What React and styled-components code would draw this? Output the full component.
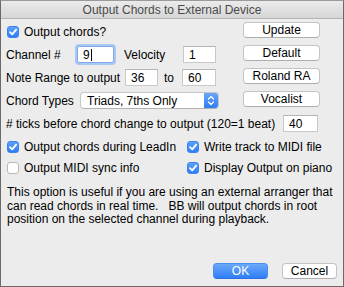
import React from "react";
import styled, { createGlobalStyle } from "styled-components";

const GlobalStyle = createGlobalStyle`
  html, body {
    margin: 0;
    padding: 0;
    background: #ececec;
  }
  body {
    font-family: "Liberation Sans", Arial, sans-serif;
    -webkit-font-smoothing: antialiased;
  }
`;

function Check({ on }) {
  return (
    <Box on={on ? 1 : 0}>
      {on && (
        <svg width="10" height="10" viewBox="0 0 10 10">
          <path d="M2 5.2 L4.2 7.4 L8.2 2.6" fill="none" stroke="#fff" strokeWidth="1.8" strokeLinecap="round" strokeLinejoin="round" />
        </svg>
      )}
    </Box>
  );
}

function CheckItem({ on, children }) {
  return (
    <CheckLabel>
      <Check on={on} />
      <span>{children}</span>
    </CheckLabel>
  );
}

export default function App() {
  return (
    <Window>
      <GlobalStyle />
      <TitleBar>Output Chords to External Device</TitleBar>
      <Body>
        <Top>
          <LeftCol>
            <Row>
              <CheckItem on>Output chords?</CheckItem>
            </Row>
            <Row>
              <Label w={71}>Channel #</Label>
              <Field w={37} focused>9<Caret /></Field>
              <Label w={59} style={{ marginLeft: 10 }}>Velocity</Label>
              <Field w={33}>1</Field>
            </Row>
            <Row>
              <Label w={119}>Note Range to output</Label>
              <Field w={33}>36</Field>
              <To>to</To>
              <Field w={34}>60</Field>
            </Row>
            <Row>
              <Label w={74}>Chord Types</Label>
              <Select>
                <span>Triads, 7ths Only</span>
                <Stepper>
                  <svg width="8" height="11" viewBox="0 0 8 11">
                    <path d="M1.5 4 L4 1.5 L6.5 4 M1.5 7 L4 9.5 L6.5 7" fill="none" stroke="#fff" strokeWidth="1.3" strokeLinecap="round" strokeLinejoin="round" />
                  </svg>
                </Stepper>
              </Select>
            </Row>
          </LeftCol>
          <RightCol>
            <Button>Update</Button>
            <Button>Default</Button>
            <Button>Roland RA</Button>
            <Button>Vocalist</Button>
          </RightCol>
        </Top>
        <TicksRow>
          <span># ticks before chord change to output (120=1 beat)</span>
          <Field w={35}>40</Field>
        </TicksRow>
        <CheckGrid>
          <CheckItem on>Output chords during LeadIn</CheckItem>
          <CheckItem on>Write track to MIDI file</CheckItem>
          <CheckItem>Output MIDI sync info</CheckItem>
          <CheckItem on>Display Output on piano</CheckItem>
        </CheckGrid>
        <Note>
          This option is useful if you are using an external arranger that can read chords in real time.&nbsp;&nbsp; BB will output chords in root position on the selected channel during playback.
        </Note>
        <Footer>
          <Button primary w={55}>OK</Button>
          <Button w={55}>Cancel</Button>
        </Footer>
      </Body>
    </Window>
  );
}

const Window = styled.div`
  width: 344px;
  height: 287px;
  box-sizing: border-box;
  border: 1px solid #6a6a6a;
  border-top-color: #9a9a9a;
  background: #ececec;
  display: flex;
  flex-direction: column;
  color: #000;
  font-size: 12px;
  overflow: hidden;
`;

const TitleBar = styled.div`
  height: 17px;
  flex: none;
  background: linear-gradient(#ebebeb, #d6d6d6);
  border-bottom: 1px solid #b4b4b4;
  color: #4a4a4a;
  font-size: 12px;
  display: flex;
  align-items: center;
  justify-content: center;
`;

const Body = styled.div`
  flex: 1;
  display: flex;
  flex-direction: column;
  padding: 1px 6px 0 5px;
`;

const Top = styled.div`
  display: flex;
  justify-content: space-between;
`;

const LeftCol = styled.div`
  display: flex;
  flex-direction: column;
`;

const Row = styled.div`
  height: 23px;
  display: flex;
  align-items: center;
`;

const RightCol = styled.div`
  display: flex;
  flex-direction: column;
  gap: 7px;
  padding-top: 2px;
  margin-right: 17px;
`;

const Label = styled.span`
  width: ${(p) => p.w}px;
  flex: none;
`;

const To = styled.span`
  width: 24px;
  padding-left: 6px;
  box-sizing: border-box;
`;

const Field = styled.div`
  width: ${(p) => p.w}px;
  height: 17px;
  box-sizing: border-box;
  background: #fff;
  border: 1px solid ${(p) => (p.focused ? "#7fa9e6" : "#c9c9c9")};
  border-top-color: ${(p) => (p.focused ? "#7fa9e6" : "#b5b5b5")};
  box-shadow: ${(p) => (p.focused ? "0 0 0 2px #a9c8f3" : "none")};
  border-radius: ${(p) => (p.focused ? "2px" : "0")};
  padding: 2px 0 0 5px;
  font-size: 12px;
  line-height: 13px;
  display: flex;
  align-items: flex-start;
`;

const Caret = styled.span`
  width: 1px;
  height: 12px;
  background: #000;
  margin-left: 1px;
`;

const Select = styled.div`
  width: 139px;
  height: 17px;
  box-sizing: border-box;
  background: #fff;
  border: 1px solid #c6c6c6;
  border-bottom-color: #b3b3b3;
  border-radius: 4px;
  display: flex;
  align-items: center;
  justify-content: space-between;
  padding-left: 6px;
  overflow: hidden;
`;

const Stepper = styled.div`
  width: 14px;
  height: 100%;
  background: linear-gradient(#6aa6f8, #2f7cf5);
  display: flex;
  align-items: center;
  justify-content: center;
`;

const Button = styled.div`
  width: ${(p) => p.w || 77}px;
  height: 16px;
  box-sizing: border-box;
  border: 1px solid ${(p) => (p.primary ? "#4a8ef2" : "#c4c4c4")};
  border-bottom-color: ${(p) => (p.primary ? "#2b6fe0" : "#adadad")};
  border-radius: 4px;
  background: ${(p) => (p.primary ? "linear-gradient(#6aa8fa, #2f7ef6)" : "#fff")};
  color: ${(p) => (p.primary ? "#fff" : "#000")};
  display: flex;
  align-items: center;
  justify-content: center;
  font-size: 12px;
`;

const TicksRow = styled.div`
  height: 23px;
  display: flex;
  align-items: center;
  justify-content: space-between;
  padding-right: 19px;
`;

const CheckGrid = styled.div`
  display: grid;
  grid-template-columns: 180px 1fr;
  grid-auto-rows: 21px;
  align-items: center;
  padding-top: 1px;
`;

const CheckLabel = styled.label`
  display: flex;
  align-items: center;
  gap: 5px;
  padding-left: 1px;
`;

const Box = styled.span`
  width: 12px;
  height: 12px;
  box-sizing: border-box;
  border-radius: 3px;
  flex: none;
  display: flex;
  align-items: center;
  justify-content: center;
  background: ${(p) => (p.on ? "linear-gradient(#5da2fb, #2f7df6)" : "#fff")};
  border: 1px solid ${(p) => (p.on ? "#3a83f0" : "#b8b8b8")};
`;

const Note = styled.p`
  margin: 8px 0 0 1px;
  line-height: 13.5px;
  font-size: 12px;
`;

const Footer = styled.div`
  margin-top: auto;
  margin-bottom: 7px;
  display: flex;
  justify-content: flex-end;
  gap: 14px;
`;
